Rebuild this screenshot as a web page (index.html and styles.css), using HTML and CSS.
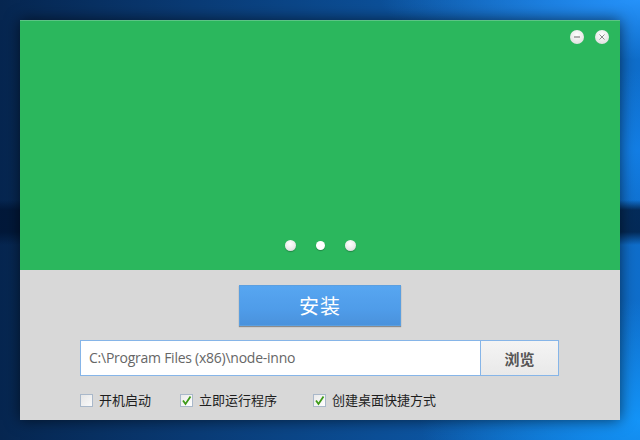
FILE: index.html
```html
<!DOCTYPE html>
<html lang="zh-CN">
<head>
<meta charset="utf-8">
<title>node-inno 安装</title>
<link rel="stylesheet" href="styles.css">
</head>
<body>
<div class="desktop">
  <div class="window">
    <div class="banner">
      <div class="controls">
        <span class="ctl"><svg width="8" height="8" viewBox="0 0 8 8"><path d="M1 4h6" stroke="#8a8a8a" stroke-width="1.3"/></svg></span>
        <span class="ctl"><svg width="8" height="8" viewBox="0 0 8 8"><path d="M1.5 1.5l5 5M6.5 1.5l-5 5" stroke="#8a8a8a" stroke-width="1"/></svg></span>
      </div>
      <div class="dots">
        <span class="dot"></span>
        <span class="dot small"></span>
        <span class="dot"></span>
      </div>
    </div>
    <div class="panel">
      <button class="install">安装</button>
      <div class="path-row">
        <div class="path">C:\Program Files (x86)\node-inno</div>
        <button class="browse">浏览</button>
      </div>
      <div class="options">
        <label class="opt"><span class="box"></span>开机启动</label>
        <label class="opt"><span class="box checked"><svg width="11" height="11" viewBox="0 0 11 11"><path d="M2 5.5l2.5 3.5L9.5 1.5" fill="none" stroke="#3d9a17" stroke-width="1.8"/></svg></span>立即运行程序</label>
        <label class="opt"><span class="box checked"><svg width="11" height="11" viewBox="0 0 11 11"><path d="M2 5.5l2.5 3.5L9.5 1.5" fill="none" stroke="#3d9a17" stroke-width="1.8"/></svg></span>创建桌面快捷方式</label>
      </div>
    </div>
  </div>
</div>
</body>
</html>
```
FILE: styles.css
```css
html, body {
  margin: 0;
  padding: 0;
}
body {
  width: 640px;
  height: 440px;
  overflow: hidden;
  font-family: "Noto Sans CJK SC", "Noto Sans", sans-serif;
}
.desktop {
  width: 640px;
  height: 440px;
  padding: 20px;
  box-sizing: border-box;
  background:
    linear-gradient(180deg, transparent 0, transparent 200px, rgba(0,20,50,0.75) 210px, rgba(0,20,50,0.75) 232px, transparent 245px),
    radial-gradient(ellipse 260px 60px at 640px 0px, rgba(40,150,255,0.9), transparent),
    radial-gradient(ellipse 220px 120px at 640px 420px, rgba(20,150,250,0.95), transparent),
    radial-gradient(ellipse 200px 80px at 640px 150px, rgba(20,130,235,0.8), transparent),
    linear-gradient(90deg, #062650 0, #0a3b75 30%, #0d5aaa 75%, #0f6ecb 100%);
}
.window {
  width: 600px;
  height: 400px;
  display: flex;
  flex-direction: column;
  box-shadow: 0 0 14px rgba(0,0,0,0.6);
}
.banner {
  position: relative;
  height: 250px;
  background: #2bb75d;
  border-top: 1px solid #5cc485;
  box-sizing: border-box;
  display: flex;
  align-items: flex-end;
  justify-content: center;
}
.controls {
  position: absolute;
  top: 9px;
  right: 11px;
  display: flex;
  gap: 11px;
}
.ctl {
  width: 14px;
  height: 14px;
  border-radius: 50%;
  background: radial-gradient(circle at 50% 35%, #ffffff, #e4e4e4 70%, #cfcfcf);
  display: flex;
  align-items: center;
  justify-content: center;
}
.dots {
  display: flex;
  align-items: center;
  gap: 20px;
  height: 12px;
  margin-bottom: 19px;
}
.dot {
  width: 11px;
  height: 11px;
  border-radius: 50%;
  background: radial-gradient(circle at 45% 35%, #ffffff, #e8e8e8 60%, #bdbdbd);
  box-shadow: 0 1px 1px rgba(0,0,0,0.25);
}
.dot.small {
  width: 9px;
  height: 9px;
  background: #fff;
}
.panel {
  flex: 1;
  background: #d8d8d8;
  display: flex;
  flex-direction: column;
  align-items: center;
  padding-top: 15px;
}
.install {
  width: 162px;
  height: 41px;
  border: 1px solid #5b9fe0;
  background: linear-gradient(180deg, #57a6f1 0, #4f9ce9 60%, #4a92dc 100%);
  box-shadow: 0 1px 1px rgba(0,0,0,0.35);
  color: #fff;
  font-family: "Noto Sans CJK SC", sans-serif;
  font-size: 20px;
  padding: 0;
  letter-spacing: 1px;
  line-height: 38px;
}
.path-row {
  margin-top: 14px;
  display: flex;
  width: 479px;
  height: 36px;
  align-self: flex-start;
  margin-left: 60px;
}
.path {
  flex: 1;
  background: #fff;
  border: 1px solid #86b5e8;
  border-right: none;
  box-sizing: border-box;
  padding-left: 8px;
  font-family: "Open Sans", "Noto Sans CJK SC", sans-serif;
  font-size: 14px;
  color: #666;
  line-height: 33px;
  letter-spacing: -0.25px;
}
.browse {
  width: 79px;
  height: 36px;
  border: 1px solid #86b5e8;
  background: linear-gradient(180deg, #f4f4f4, #e9e9e9);
  font-family: "Noto Sans CJK SC", sans-serif;
  font-weight: bold;
  font-size: 15px;
  color: #555;
  padding: 0;
}
.options {
  align-self: flex-start;
  margin-left: 60px;
  margin-top: 15px;
  display: flex;
  font-size: 13px;
  color: #1e1e1e;
  line-height: 18px;
}
.opt {
  display: flex;
  align-items: center;
  gap: 6px;
}
.opt:nth-child(1) { width: 100px; }
.opt:nth-child(2) { width: 133px; }
.box {
  width: 13px;
  height: 13px;
  box-sizing: border-box;
  border: 1px solid #a9b8ca;
  background: linear-gradient(135deg, #e6e6e6, #fafafa);
  display: flex;
  align-items: center;
  justify-content: center;
}
.box.checked {
  background: linear-gradient(135deg, #eaeaea, #ffffff);
}
```
